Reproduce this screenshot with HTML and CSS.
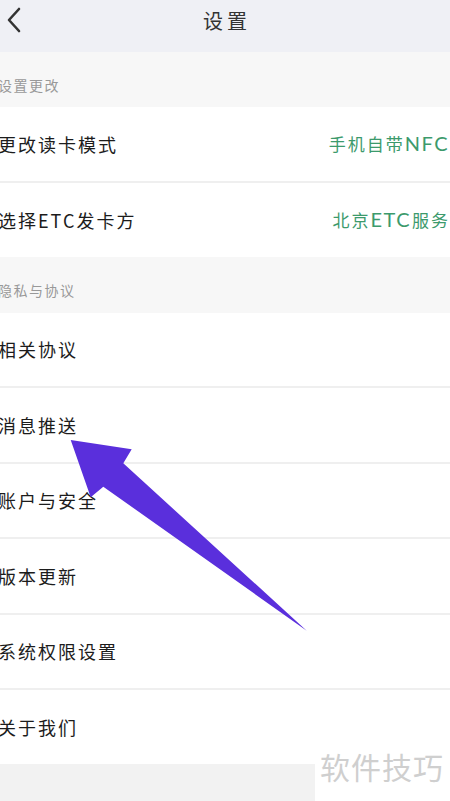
FILE: index.html
```html
<!DOCTYPE html>
<html lang="zh-CN">
<head>
    <meta charset="UTF-8">
    <meta name="viewport" content="width=device-width, initial-scale=1.0">
    <title>设置</title>
    <link rel="stylesheet" href="styles.css">
</head>
<body>
    <div class="pagina">
        <header class="barra">
            <svg class="atras" width="16" height="26" viewBox="0 0 16 26">
                <path d="M13 2 L3 13 L13 24" fill="none" stroke="#333" stroke-width="2.6" stroke-linecap="round" stroke-linejoin="round"/>
            </svg>
            <h1 class="titulo">设置</h1>
        </header>

        <div class="grupo-titulo">设置更改</div>
        <ul class="grupo">
            <li class="fila"><span class="etiqueta">更改读卡模式</span><span class="valor">手机自带<span class="latin">NFC</span></span></li>
            <li class="fila"><span class="etiqueta">选择ETC发卡方</span><span class="valor valor-corto">北京<span class="latin">ETC</span>服务</span></li>
        </ul>

        <div class="grupo-titulo">隐私与协议</div>
        <ul class="grupo">
            <li class="fila"><span class="etiqueta">相关协议</span></li>
            <li class="fila"><span class="etiqueta">消息推送</span></li>
            <li class="fila"><span class="etiqueta">账户与安全</span></li>
            <li class="fila"><span class="etiqueta">版本更新</span></li>
            <li class="fila"><span class="etiqueta">系统权限设置</span></li>
            <li class="fila"><span class="etiqueta">关于我们</span></li>
        </ul>

        <div class="pie"></div>

        <!-- flecha de la captura -->
        <svg class="flecha" width="450" height="801" viewBox="0 0 450 801">
            <polygon points="70.7,440 131.7,449.3 123.3,463.3 306.7,630.7 103.3,486.7 90.7,497.3" fill="#5a2fdc"/>
        </svg>

        <div class="marca">软件技巧</div>
    </div>
</body>
</html>
```

FILE: styles.css
```css
* {
    box-sizing: border-box;
}
body {
    margin: 0;
    background-color: #f2f2f2;
    font-family: "Noto Sans CJK SC", "Noto Sans", sans-serif;
    overflow: hidden;
}
.pagina {
    position: relative;
    width: 450px;
    height: 801px;
    overflow: hidden;
}
.barra {
    height: 52px;
    background-color: #eff0f5;
    display: flex;
    align-items: center;
    justify-content: center;
    position: relative;
}
.atras {
    position: absolute;
    left: 6px;
    top: 7px;
}
.titulo {
    margin: 0;
    font-size: 20px;
    font-weight: 400;
    letter-spacing: 4px;
    color: #333;
    padding-left: 4px;
    line-height: 24px;
    margin-top: -10px;
}
.grupo-titulo {
    height: 55px;
    padding-top: 23px;
    background-color: #f7f7f7;
    font-size: 14px;
    line-height: 20px;
    letter-spacing: 1.5px;
    color: #999;
    text-indent: -2px;
}
.grupo + .grupo-titulo {
    height: 56px;
}
.grupo {
    list-style: none;
    margin: 0;
    padding: 0;
    background-color: #fff;
}
.fila {
    height: 75.5px;
    border-bottom: 2px solid #efefef;
    display: flex;
    align-items: center;
    justify-content: space-between;
    white-space: nowrap;
}
.fila:last-child {
    border-bottom: none;
    height: 74px;
}
.etiqueta {
    font-size: 18px;
    letter-spacing: 2px;
    color: #1c1c1c;
    margin-left: -2px;
}
.valor {
    flex: 0 0 118px;
    font-size: 17px;
    letter-spacing: 2px;
    color: #3c9a6c;
}
.valor-corto {
    flex-basis: 114px;
}
.valor .latin {
    font-family: "Lato", "Noto Sans", sans-serif;
    font-size: 20px;
    letter-spacing: 1.5px;
    margin-right: 1px;
}
.pie {
    height: 40px;
    background-color: #f2f2f2;
}
.flecha {
    position: absolute;
    left: 0;
    top: 0;
}
.marca {
    position: absolute;
    right: 0;
    bottom: 0;
    width: 135px;
    height: 56px;
    padding-top: 6px;
    padding-left: 5px;
    background-color: #fff;
    font-size: 30px;
    line-height: 30px;
    letter-spacing: 1px;
    color: #cfcfcf;
    white-space: nowrap;
}
```
